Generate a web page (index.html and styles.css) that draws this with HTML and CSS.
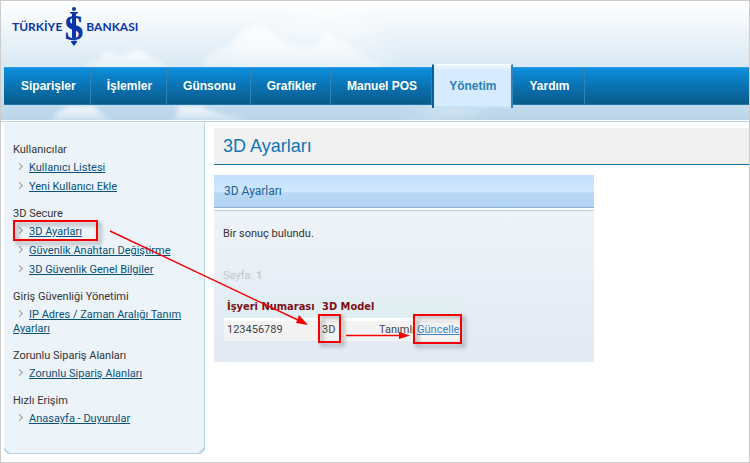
FILE: index.html
```html
<!DOCTYPE html>
<html lang="tr">
<head>
    <meta charset="UTF-8">
    <meta name="viewport" content="width=device-width, initial-scale=1.0">
    <title>3D Ayarları</title>
    <link rel="stylesheet" href="styles.css">
</head>
<body>
    <div class="page">
        <header class="header">
            <svg class="clouds" width="748" height="119" viewBox="1 1 748 119" aria-hidden="true">
                <defs>
                    <filter id="soft" x="-20%" y="-20%" width="140%" height="140%"><feGaussianBlur stdDeviation="2"/></filter>
                    <filter id="haze" x="-20%" y="-20%" width="140%" height="140%"><feGaussianBlur stdDeviation="6"/></filter>
                    <linearGradient id="puff" x1="0" y1="0" x2="0" y2="1">
                        <stop offset="0" stop-color="#fff" stop-opacity="0.8"/>
                        <stop offset="1" stop-color="#fff" stop-opacity="0.3"/>
                    </linearGradient>
                </defs>
                <g fill="url(#puff)">
                    <g filter="url(#soft)">
                        <path d="M84 68 Q92 58 100 60 Q102 50 112 53 Q122 58 126 54 Q138 46 147 54 Q160 62 172 68 Z"/>
                        <path d="M202 68 Q202 58 212 54 Q218 46 230 46 Q232 38 242 32 Q250 26 264 27 Q274 34 280 40 Q300 50 316 44 Q324 38 322 30 Q350 44 384 68 Z"/>
                        <path d="M52 120 Q56 110 70 106 L94 106 Q98 112 112 120 Z"/>
                        <path d="M172 120 Q182 112 176 106 L200 106 Q210 112 250 120 Z"/>
                    </g>
                    <g filter="url(#haze)" opacity="0.5">
                        <path d="M250 30 L330 8 L372 20 L400 68 H230 Z"/>
                        <path d="M400 120 L440 106 H490 L460 120 Z"/>
                    </g>
                </g>
            </svg>
            <a class="logo" href="#">
                <span>TÜRKİYE</span>
                <svg class="emblem" width="18" height="40" viewBox="0 0 18 40" aria-hidden="true">
                    <circle cx="9" cy="2" r="2"/>
                    <path d="M5 5H13V6L11 7V31L9 32L7 31V7L5 6Z"/>
                    <path d="M6 34L9 33L12 34V35L9 39L6 35Z"/>
                    <text class="emblem-letter" x="9" y="33" text-anchor="middle">S</text>
                    <path d="M7 8H11V31H7Z"/>
                </svg>
                <span>BANKASI</span>
            </a>
            <nav class="nav">
                <a href="#">Siparişler</a>
                <a href="#">İşlemler</a>
                <a href="#">Günsonu</a>
                <a href="#">Grafikler</a>
                <a href="#">Manuel POS</a>
                <a href="#" class="active">Yönetim</a>
                <a href="#">Yardım</a>
            </nav>
        </header>

        <div class="columns">
            <aside class="sidebar">
                <h2>Kullanıcılar</h2>
                <ul>
                    <li><a href="#">Kullanıcı Listesi</a></li>
                    <li><a href="#">Yeni Kullanıcı Ekle</a></li>
                </ul>
                <h2>3D Secure</h2>
                <ul>
                    <li><a href="#">3D Ayarları</a></li>
                    <li><a href="#">Güvenlik Anahtarı Değiştirme</a></li>
                    <li><a href="#">3D Güvenlik Genel Bilgiler</a></li>
                </ul>
                <h2>Giriş Güvenliği Yönetimi</h2>
                <ul>
                    <li><a href="#">IP Adres / Zaman Aralığı Tanım Ayarları</a></li>
                </ul>
                <h2>Zorunlu Sipariş Alanları</h2>
                <ul>
                    <li><a href="#">Zorunlu Sipariş Alanları</a></li>
                </ul>
                <h2>Hızlı Erişim</h2>
                <ul>
                    <li><a href="#">Anasayfa - Duyurular</a></li>
                </ul>
            </aside>

            <main class="main">
                <h1>3D Ayarları</h1>
                <section class="panel">
                    <h2 class="panel-title">3D Ayarları</h2>
                    <div class="panel-body">
                        <p class="result">Bir sonuç bulundu.</p>
                        <p class="pager">Sayfa: <b>1</b></p>
                        <table>
                            <colgroup>
                                <col class="col-number">
                                <col class="col-model">
                                <col class="col-state">
                                <col class="col-action">
                            </colgroup>
                            <thead>
                                <tr>
                                    <th>İşyeri Numarası</th>
                                    <th>3D Model</th>
                                    <th></th>
                                    <th></th>
                                </tr>
                            </thead>
                            <tbody>
                                <tr>
                                    <td>123456789</td>
                                    <td>3D</td>
                                    <td>Tanımlı</td>
                                    <td><a href="#">Güncelle</a></td>
                                </tr>
                            </tbody>
                        </table>
                    </div>
                </section>
            </main>
        </div>

        <!-- red boxes and arrows over the page -->
        <svg class="marks" width="480" height="360" viewBox="0 0 480 360" aria-hidden="true">
            <g class="mark-box">
                <rect x="14" y="221" width="83" height="19"/>
                <rect x="319" y="315" width="21" height="27"/>
                <rect x="414" y="315" width="47" height="28"/>
            </g>
            <path class="mark-line" d="M110 231L300 321M346 335.5H402"/>
            <path class="mark-head" d="M308 325L296 323L299 315ZM410 335.5L399 332V339Z"/>
        </svg>
    </div>
</body>
</html>
```
FILE: styles.css
```css
* {
    box-sizing: border-box;
}
body {
    margin: 0;
    background: #fff;
    color: #333;
    font: 11px/14px Roboto, sans-serif;
}
h1, h2, p, ul {
    margin: 0;
    padding: 0;
    font-weight: normal;
}
.page {
    position: relative;
    min-height: 100vh;
    border: 1px solid #ccc;
}

/* header */
.header {
    position: relative;
    height: 121px;
    padding-left: 3px;
    overflow: hidden;
    background: linear-gradient(#fff, #d8e8f3 56%, #bad5ea) no-repeat;
    background-size: 100% 119px;
    border-bottom: 1px solid #b9d3e7;
}
.clouds {
    position: absolute;
    top: 0;
    left: 0;
}
.logo {
    position: relative;
    display: flex;
    align-items: center;
    gap: 3px;
    height: 66px;
    padding: 5px 0 19px 8px;
    color: #0a35a8;
    font: bold 12px/14px Lato, sans-serif;
    text-decoration: none;
}
.emblem {
    fill: #0a35a8;
}
.emblem-letter {
    paint-order: stroke;
    stroke: #f4f8fc;
    stroke-width: 1px;
    font: bold 36px "Liberation Serif", serif;
}
.nav {
    position: relative;
    display: flex;
    height: 38px;
    padding-left: 1px;
    background: linear-gradient(#0d8fdd, #0a70ae 55%, #095b8c);
    border-top: 1px solid #2a9fe4;
    border-bottom: 1px solid #1e77ab;
}
.nav a {
    padding: 0 14px 0 16px;
    border-right: 1px solid #2f83b5;
    color: #fff;
    font: bold 12px/36px "Liberation Sans", Arial, sans-serif;
    text-decoration: none;
}
.nav .active {
    margin: -4px 0;
    padding: 3px 15px;
    background: linear-gradient(#edf6ff, #d6ebfe 15%, #d6ebfe 94%, #bbdcf8);
    border-left: 2px solid #0a6294;
    border-right: 2px solid #2f83b5;
    border-top: 1px solid #fff;
    color: #2c80b4;
}

/* columns */
.columns {
    display: flex;
    gap: 9px;
    padding: 1px 0 8px 3px;
}
.sidebar {
    width: 201px;
    min-height: 331px;
    padding: 20px 12px 0 9px;
    background:
        linear-gradient(45deg, #b9d5ea 4px, transparent 4px),
        linear-gradient(-45deg, #b9d5ea 4px, transparent 4px),
        #ecf4fa;
    clip-path: polygon(0 0, 100% 0, 100% calc(100% - 4px), calc(100% - 4px) 100%, 4px 100%, 0 calc(100% - 4px));
    border-right: 1px solid #b9d5ea;
    border-bottom: 1px solid #b9d5ea;
}
.sidebar h2 {
    margin-bottom: 4px;
    font-size: 11px;
}
.sidebar ul {
    margin-bottom: 8px;
    list-style: none;
}
.sidebar li {
    padding-bottom: 5px;
}
.sidebar li::before {
    content: "";
    display: inline-block;
    width: 4px;
    height: 4px;
    margin: 0 7px 2px 4px;
    border: solid #999;
    border-width: 1px 1px 0 0;
    transform: rotate(45deg);
}
.sidebar a {
    color: #0b5078;
}
.main {
    flex: 1;
    padding-top: 5px;
}
.main h1 {
    height: 37px;
    padding-left: 9px;
    background: #f1f1f1;
    border-bottom: 1px solid #1b70a8;
    color: #0f76b8;
    font: 18px/37px "Liberation Sans", Arial, sans-serif;
}

/* panel */
.panel {
    width: 380px;
    margin-top: 10px;
}
.panel-title {
    height: 33px;
    padding-left: 10px;
    background: linear-gradient(#c0dffd, #d3e7fd 54%, #b9d8f7 55%, #b3d3f4);
    border-bottom: 1px solid #8bb0d4;
    color: #1a6395;
    font-size: 12px;
    line-height: 33px;
}
.panel-body {
    min-height: 152px;
    margin-top: 2px;
    padding: 16px 9px;
    background: linear-gradient(#eef3f8, #e2e9f3);
    border-top: 1px solid #b9cedb;
}
.pager {
    margin: 28px 0 14px;
    color: #c4c8cc;
}
table {
    width: 238px;
    margin-left: 1px;
    border-collapse: collapse;
    table-layout: fixed;
}
.col-number {
    width: 95px;
}
.col-model {
    width: 57px;
}
.col-state {
    width: 38px;
}
.col-action {
    width: 48px;
}
th {
    height: 22px;
    padding: 0 3px;
    background: #e1eff2;
    border-bottom: 3px solid #fff;
    color: #7d1016;
    font-family: "DejaVu Sans Condensed", sans-serif;
    text-align: left;
    white-space: nowrap;
}
td {
    height: 22px;
    padding: 0 3px 2px;
    background: #f4f3f3;
    color: #444;
}
td a {
    color: #3e87cc;
}

/* annotations */
.marks {
    position: absolute;
    top: -1px;
    left: -1px;
    pointer-events: none;
}
.mark-box {
    fill: none;
    stroke: #f40000;
    stroke-width: 2;
    filter: drop-shadow(3px 3px 2px rgba(0, 0, 0, 0.4));
}
.mark-line {
    fill: none;
    stroke: #f40000;
    stroke-width: 1.4;
}
.mark-head {
    fill: #f40000;
}
```
